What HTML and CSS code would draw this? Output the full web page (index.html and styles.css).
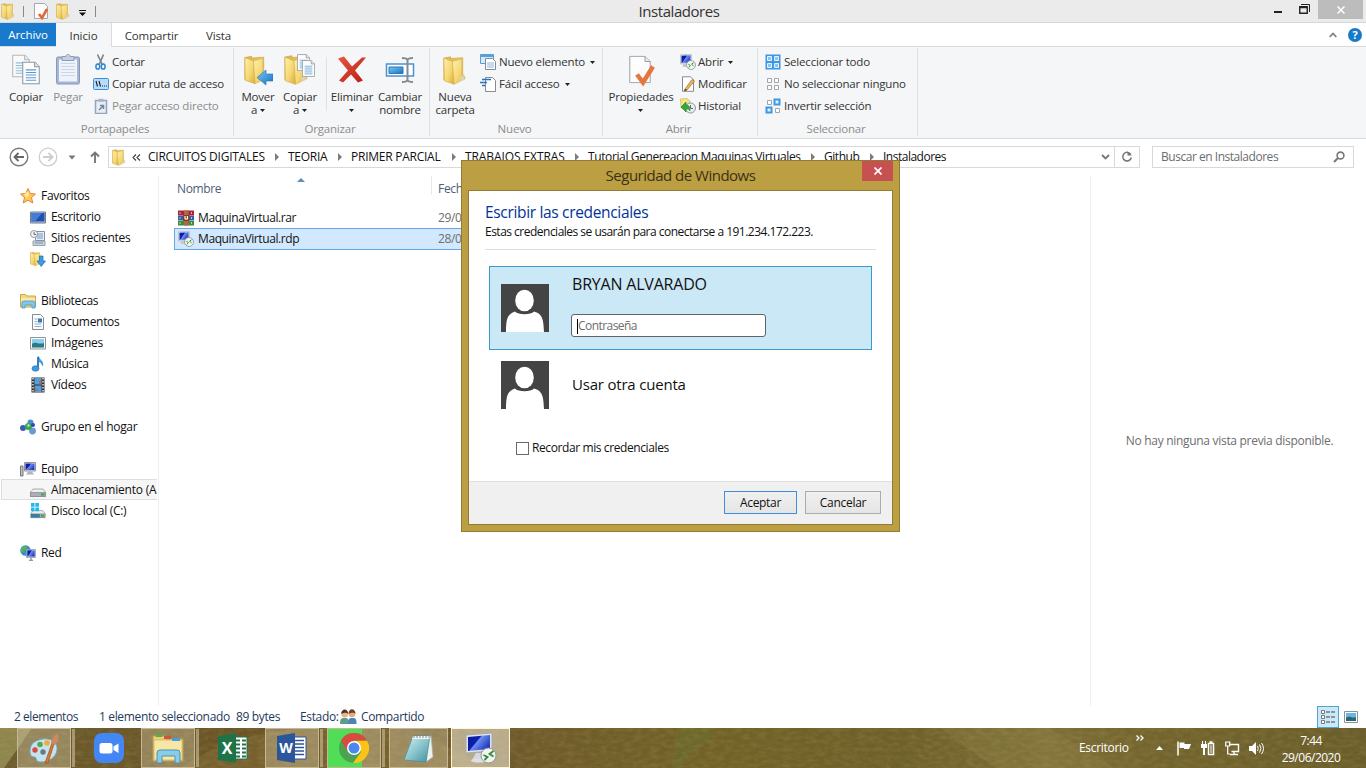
FILE: index.html
```html
<!DOCTYPE html>
<html lang="es">
<head>
<meta charset="utf-8">
<title>Instaladores</title>
<link rel="stylesheet" href="styles.css">
</head>
<body>
<svg class="defs" width="0" height="0" aria-hidden="true">
  <defs>
    <linearGradient id="gFold" x1="0" y1="0" x2="1" y2="1"><stop offset="0" stop-color="#fff0ae"/><stop offset=".55" stop-color="#f5d873"/><stop offset="1" stop-color="#d9ab3c"/></linearGradient>
    <linearGradient id="gBack" x1="0" y1="0" x2="1" y2="0"><stop offset="0" stop-color="#dcb34e"/><stop offset="1" stop-color="#e9c968"/></linearGradient>
    <linearGradient id="gScreen" x1="0" y1="0" x2="1" y2=".6"><stop offset="0" stop-color="#0a1a9c"/><stop offset=".45" stop-color="#0d1fae"/><stop offset=".5" stop-color="#6f8fee"/><stop offset="1" stop-color="#2038c0"/></linearGradient>
    <linearGradient id="gBlue" x1="0" y1="0" x2="1" y2="1"><stop offset="0" stop-color="#7ac7f5"/><stop offset="1" stop-color="#1672c4"/></linearGradient>
    <linearGradient id="gRed" x1="0" y1="0" x2="1" y2="1"><stop offset="0" stop-color="#e8553f"/><stop offset="1" stop-color="#b81f18"/></linearGradient>
    <linearGradient id="gPad" x1="0" y1="0" x2="1" y2="1"><stop offset="0" stop-color="#d8f2f4"/><stop offset=".5" stop-color="#8cc6cf"/><stop offset="1" stop-color="#3f8f9c"/></linearGradient>
    <symbol id="folder" viewBox="0 0 28 34">
      <path d="M1 2.500 L9 1 V3 L23 2 V25 L13 31 L1 28Z" fill="url(#gBack)" stroke="#c99f3e" stroke-width=".7"/>
      <path d="M1 2.500 L11 6.500 L13 33 L1.500 29Z" fill="url(#gFold)" stroke="#d2a845" stroke-width=".7"/>
      <path d="M11 6.500 L22 3.500 L22 21 C25 22 26 25 25.500 27 L13 33Z" fill="url(#gFold)" stroke="#d6ad4c" stroke-width=".6"/>
      <path d="M20 25 L25 23 L24.500 28 L19 30Z" fill="#d7d8d2" opacity=".8"/>
    </symbol>
    <symbol id="page" viewBox="0 0 22 28">
      <path d="M.8.8 H16 L21.200 6 V27.200 H.8Z" fill="#fdfdfd" stroke="#9aa0a6"/><path d="M16 .8V6H21.200" fill="#e5e8ea" stroke="#9aa0a6"/>
    </symbol>
    <symbol id="pagelines" viewBox="0 0 17 22">
      <path d="M.6.6 H12 L16.400 5 V21.400 H.6Z" fill="#fdfdfd" stroke="#8f969d"/><path d="M12 .6V5H16.400" fill="#e5e8ea" stroke="#8f969d"/>
      <path d="M3.500 8h10M3.500 10.500h10M3.500 13h10M3.500 15.500h10M3.500 18h10" stroke="#5b9bd5"/>
    </symbol>
    <symbol id="rdp" viewBox="0 0 16 16">
      <path d="M.5.8 L11.500.3 V9.500 L.5 10Z" fill="#dfe4ea" stroke="#a7adb5" stroke-width=".6"/>
      <path d="M1.500 1.800 L10.500 1.300 V8.500 L1.500 9Z" fill="url(#gScreen)"/>
      <path d="M3 10h5v3H2.500Z" fill="#c5cad0"/>
      <circle cx="11" cy="11" r="4.500" fill="#f3f5f2" stroke="#8a9298" stroke-width=".8"/>
      <path d="M8.300 10.200l2 1.300-1.500 2M13.600 8.800l-2 1.400 2 1.700" fill="none" stroke="#2d9434" stroke-width="1"/>
    </symbol>
    <symbol id="avatar" viewBox="0 0 48 48">
      <path fill="#444" d="M0 0h48v48H0z"/><ellipse cx="23.500" cy="16.500" rx="9.300" ry="10.800" fill="#fff"/>
      <path d="M5 48C5 34 7 30 14 27.500C17 31 30 31 33 27.500C41 30 42.500 34 43 48Z" fill="#fff"/>
    </symbol>
    <symbol id="caret" viewBox="0 0 5 3"><path d="M0 0h5L2.500 3z" fill="#222"/></symbol>
    <symbol id="drive" viewBox="0 0 16 16">
      <path d="M3 7h10l2.500 3v4.500h-15V10Z" fill="#eceeef" stroke="#888d92" stroke-width=".7"/><path d="M.5 10.500h15v4H.5z" fill="#a9afb3" stroke="#7a8085" stroke-width=".6"/><path d="M11 11.500h3.500v2H11z" fill="#41a541"/>
    </symbol>
    <filter id="grain" x="0" y="0" width="100%" height="100%"><feTurbulence type="fractalNoise" baseFrequency=".12 .25" numOctaves="4" seed="8"/><feColorMatrix values="0 0 0 0 .58  0 0 0 0 .44  0 0 0 0 .18  1.600 0 0 0 -.55"/></filter>
  </defs>
</svg>

<header class="titlebar">
  <div class="quick">
    <svg class="q-fold" width="14" height="17"><use href="#folder"/></svg>
    <i class="q-bar"></i>
    <svg class="q-doc" width="15" height="17" viewBox="0 0 15 17"><path d="M.5.500h10l3 3v12H.5z" fill="#fdfdfd" stroke="#a5a9ad"/><path d="M5 11l3 4L13 6" fill="none" stroke="#e0693a" stroke-width="2.600"/></svg>
    <svg class="q-fold2" width="14" height="17"><use href="#folder"/></svg>
    <svg class="q-menu" width="7" height="6" viewBox="0 0 7 6"><path d="M0 0h7v1H0zM0 2.500h7L3.500 6z" fill="#111"/></svg>
    <i class="q-bar"></i>
  </div>
  <div class="window-title">Instaladores</div>
  <div class="window-controls">
    <svg width="9" height="20" viewBox="0 0 9 20"><path d="M1 11h8v2H1z" fill="#222"/></svg>
    <svg class="restore" width="11" height="20" viewBox="0 0 11 20"><path d="M.75 6.750h7.500v6.500H.75z M.5 7.500h8" fill="none" stroke="#222" stroke-width="1.400"/><path d="M2 4.500h8.500V12" fill="none" stroke="#222"/></svg>
    <div class="close"><svg width="8" height="8" viewBox="0 0 8 8"><path d="M.5.500l7 7M7.500.500l-7 7" stroke="#fff" stroke-width="1.500"/></svg></div>
  </div>
</header>

<nav class="tabs">
  <div class="tab file">Archivo</div><div class="tab active">Inicio</div><div class="tab share">Compartir</div><div class="tab view">Vista</div>
  <div class="tab-tools">
    <svg width="8" height="6" viewBox="0 0 8 6"><path d="M.7 5L4 1.500L7.300 5" fill="none" stroke="#7e7e7e" stroke-width="1.800"/></svg>
    <div class="help">?</div>
  </div>
</nav>

<section class="ribbon">
  <div class="group clip">
    <div class="tools">
      <div class="big"><svg width="30" height="32" viewBox="0 0 30 32"><g opacity=".65"><use href="#pagelines" x="1" y="0" width="18" height="23"/></g><use href="#pagelines" x="11" y="7" width="18" height="23"/></svg><span>Copiar</span></div>
      <div class="big off"><svg width="26" height="32" viewBox="0 0 26 32"><rect x="1.500" y="2.500" width="23" height="27" rx="1.500" fill="#a7b6d2" stroke="#8798b8"/><path d="M4 5h18v22H4z" fill="#eef2fa"/><path d="M6 9h14M6 12h14M6 15h14M6 18h14M6 21h14" stroke="#cbd5e6"/><path d="M7 2h4c0-3 4-3 4 0h4v4H7z" fill="#c8d0e0" stroke="#8f9cb8"/></svg><span>Pegar</span></div>
      <div class="rows">
        <div class="row"><svg width="16" height="16" viewBox="0 0 16 16"><path d="M4.500.500L9.500 11M10.500.500L6 11" stroke="#7d8790" stroke-width="1.700"/><ellipse cx="4.800" cy="12.500" rx="1.900" ry="2.600" fill="none" stroke="#2a86cf" stroke-width="1.500"/><ellipse cx="10.200" cy="12.500" rx="1.900" ry="2.600" fill="none" stroke="#2a86cf" stroke-width="1.500"/></svg><span>Cortar</span></div>
        <div class="row"><svg width="16" height="16" viewBox="0 0 16 16"><rect x=".5" y="2.500" width="15" height="11" rx="1" fill="#b9dcfa" stroke="#3e8ede"/><path d="M3 5l1.500 5.500M6 5l1.500 5.500M9 10h1M11 10h1M13 10h1" stroke="#16212e" stroke-width="1.100"/></svg><span>Copiar ruta de acceso</span></div>
        <div class="row off"><svg width="16" height="16" viewBox="0 0 16 16"><path d="M2.500 2.500h11v13h-11z" fill="#e7ecf5" stroke="#96a4bf" stroke-width="1.500"/><path d="M5.500.800h5v3h-5z" fill="#a9b4ca"/><path d="M6 12L10 8M7 7.500h3.500V11" fill="none" stroke="#73839f" stroke-width="1.500"/></svg><span>Pegar acceso directo</span></div>
      </div>
    </div>
    <div class="caption">Portapapeles</div>
  </div>
  <div class="group organize">
    <div class="tools">
      <div class="big"><svg width="30" height="33" viewBox="0 0 30 33"><use href="#folder" x="1" y="0" width="24" height="32"/><path d="M30 20v7h-7v4l-9-7.500 9-7.500v4Z" fill="url(#gBlue)" stroke="#2673ae" stroke-width=".6"/></svg><span>Mover<br>a <svg class="car"><use href="#caret"/></svg></span></div>
      <div class="big"><svg width="32" height="33" viewBox="0 0 32 33"><use href="#folder" x="0" y="0" width="25" height="32"/><use href="#pagelines" x="13" y="0" width="13" height="17"/><use href="#pagelines" x="18" y="6" width="13" height="17"/></svg><span>Copiar<br>a <svg class="car"><use href="#caret"/></svg></span></div>
      <i class="mini"></i>
      <div class="big w50"><svg width="32" height="32" viewBox="0 0 32 32"><path d="M2 4L8 2L16 12L26 3H30L19 16L27 26L22 28L15 20L7 28L3 26L12 16Z" fill="url(#gRed)"/></svg><span>Eliminar<br><svg class="car"><use href="#caret"/></svg></span></div>
      <div class="big w46"><svg width="30" height="32" viewBox="0 0 30 32"><path d="M1.500 9.500h27v12h-27z" fill="#fff" stroke="#4894d2" stroke-width="1.500"/><path d="M4 12.500h14v6.500H4z" fill="url(#gBlue)" stroke="#3275af"/><path d="M17 3.500c3 0 5 0 5.500 2v20c-.5 2-2.500 2-5.500 2M28 3.500c-3 0-5 0-5.500 2M28 27.500c-3 0-5 0-5.500-2" fill="none" stroke="#858b91" stroke-width="2"/></svg><span>Cambiar<br>nombre</span></div>
    </div>
    <div class="caption">Organizar</div>
  </div>
  <div class="group newer">
    <div class="tools">
      <div class="big w50"><svg width="26" height="33" viewBox="0 0 26 33"><use href="#folder" x="1" y="0" width="24" height="33"/></svg><span>Nueva<br>carpeta</span></div>
      <div class="rows">
        <div class="row"><svg width="16" height="16" viewBox="0 0 16 16"><path d="M.5.500h13v9H.5z" fill="#d5eafa" stroke="#5a9ed5"/><path d="M.5 1h13v2H.5z" fill="#5a9ed5"/><path d="M5.500 4.500h7l3 3v8h-10z" fill="#fff" stroke="#858b91"/><path d="M7 9h7M7 11h7M7 13h7" stroke="#8ab8dd"/></svg><span>Nuevo elemento</span><svg class="car"><use href="#caret"/></svg></div>
        <div class="row"><svg width="16" height="16" viewBox="0 0 16 16"><path d="M5.500 1.500h7l3 3v11h-10z" fill="#fff" stroke="#858b91"/><path d="M2 3.500h9M0 6.500h7M2 9.500h3" stroke="#2675bd" stroke-width="1.500"/></svg><span>Fácil acceso</span><svg class="car"><use href="#caret"/></svg></div>
      </div>
    </div>
    <div class="caption">Nuevo</div>
  </div>
  <div class="group opener">
    <div class="tools">
      <div class="big w74"><svg width="28" height="32" viewBox="0 0 28 32"><use href="#page" x="1" y="1" width="24" height="28"/><path d="M10 20l6 8L26 12" fill="none" stroke="#e5763f" stroke-width="4.500"/></svg><span>Propiedades<br><svg class="car"><use href="#caret"/></svg></span></div>
      <div class="rows">
        <div class="row"><svg width="16" height="16"><use href="#rdp"/></svg><span>Abrir</span><svg class="car"><use href="#caret"/></svg></div>
        <div class="row"><svg width="16" height="16" viewBox="0 0 16 16"><path d="M2.500.800h8l3 3v11.500h-11z" fill="#fff" stroke="#858b91"/><path d="M5 13L12 3.500l2.500 1.500L7 14l-2.500 1z" fill="#efb65f" stroke="#9a6a2c" stroke-width=".7"/><path d="M5 13l2 1-2.500 1z" fill="#222"/></svg><span>Modificar</span></div>
        <div class="row"><svg width="16" height="16" viewBox="0 0 16 16"><path d="M.5 1L7 .5 10 3v9L1 10z" fill="#f4e58c" stroke="#cfb646" stroke-width=".7"/><circle cx="10.500" cy="10" r="5" fill="#e9eef2" stroke="#8a949c"/><path d="M10.500 7v3.500H13" fill="none" stroke="#5d6870"/><path d="M1 9l5-5v3c3 0 4 2 4 6-1-2-2-2-4-2v3z" fill="#36a93c" stroke="#1d7d2a" stroke-width=".6"/></svg><span>Historial</span></div>
      </div>
    </div>
    <div class="caption">Abrir</div>
  </div>
  <div class="group selector">
    <div class="tools">
      <div class="rows">
        <div class="row"><svg width="16" height="16" viewBox="0 0 16 16"><path d="M.5.500h15v15H.5z" fill="#3e97e3"/><path d="M2.500 2.500h4v4h-4zM9.500 2.500h4v4h-4zM2.500 9.500h4v4h-4zM9.500 9.500h4v4h-4z" fill="#8cc4f5" stroke="#e8f4fe"/></svg><span>Seleccionar todo</span></div>
        <div class="row"><svg width="16" height="16" viewBox="0 0 16 16"><path d="M2.500 2.500h4v4h-4zM9.500 2.500h4v4h-4zM2.500 9.500h4v4h-4zM9.500 9.500h4v4h-4z" fill="#fff" stroke="#a2a6aa"/></svg><span>No seleccionar ninguno</span></div>
        <div class="row"><svg width="16" height="16" viewBox="0 0 16 16"><path d="M2.500 2.500h4v4h-4zM10.500 10.500h4v4h-4z" fill="#fff" stroke="#a2a6aa"/><path d="M9.500 1.500h5v5h-5zM1.500 9.500h5v5h-5z" fill="#e3f1fd" stroke="#3e97e3" stroke-width="2"/></svg><span>Invertir selección</span></div>
      </div>
    </div>
    <div class="caption">Seleccionar</div>
  </div>
</section>

<section class="address">
  <div class="nav-buttons">
    <svg width="20" height="20" viewBox="0 0 20 20"><circle cx="10" cy="10" r="8.800" fill="none" stroke="#7a7a7a" stroke-width="1.400"/><path d="M15 10H6M9.500 6L5.500 10l4 4" fill="none" stroke="#666" stroke-width="1.900"/></svg>
    <svg width="20" height="20" viewBox="0 0 20 20"><circle cx="10" cy="10" r="8.800" fill="none" stroke="#cdcdcd" stroke-width="1.200"/><path d="M5 10h9M10.500 6l4 4-4 4" fill="none" stroke="#cdcdcd" stroke-width="1.800"/></svg>
    <svg class="hist" width="8" height="5" viewBox="0 0 8 5"><path d="M.5.500h7L4 4.500z" fill="#777"/></svg>
    <svg class="up" width="10" height="12" viewBox="0 0 10 12"><path d="M5 12V2M1 5.500L5 1.500l4 4" fill="none" stroke="#777" stroke-width="1.900"/></svg>
  </div>
  <div class="crumbs">
    <svg class="crumb-icon" width="14" height="17"><use href="#folder"/></svg>
    <svg class="chev" width="9" height="7" viewBox="0 0 9 7"><path d="M4 .5L1 3.500l3 3M8 .5L5 3.500l3 3" fill="none" stroke="#444" stroke-width="1.200"/></svg>
    <ol class="trail"><li>CIRCUITOS DIGITALES</li><li>TEORIA</li><li>PRIMER PARCIAL</li><li>TRABAJOS EXTRAS</li><li>Tutorial Genereacion Maquinas Virtuales</li><li>Github</li><li>Instaladores</li></ol>
    <svg class="drop" width="9" height="6" viewBox="0 0 9 6"><path d="M1 1l3.500 3.500L8 1" fill="none" stroke="#777" stroke-width="1.900"/></svg>
    <div class="reload"><svg width="12" height="12" viewBox="0 0 12 12"><path d="M9.800 3.500A4.300 4.300 0 1 0 10.300 6.500" fill="none" stroke="#777" stroke-width="1.500"/><path d="M6.500 .2V4.500h4.300z" fill="#777"/></svg></div>
  </div>
  <div class="search"><span>Buscar en Instaladores</span><svg width="12" height="12" viewBox="0 0 12 12"><circle cx="7.500" cy="4.500" r="3.400" fill="none" stroke="#777" stroke-width="1.600"/><path d="M5 7L1 11" stroke="#777" stroke-width="2"/></svg></div>
</section>

<main class="content">
  <aside class="tree">
    <div class="node top"><svg viewBox="0 0 16 16"><path d="M8 .5l2.200 5 5.300.500-4 3.500 1.300 5.500L8 12.200 3.200 15l1.300-5.500L.5 6l5.300-.5z" fill="#ffc74f" stroke="#e2853b"/><path d="M8 3l1.300 3.500L7 10 4 6.500z" fill="#ffeb9e"/></svg><span>Favoritos</span></div>
    <div class="node"><svg viewBox="0 0 16 16"><path d="M.5 3h15v11H.5z" fill="#b7c5d3" stroke="#6d7b8b"/><path d="M1.500 4h13v8.500h-13z" fill="#1f4fb5"/><path d="M1.500 4H12L5 12.500H1.500z" fill="#437ed5"/></svg><span>Escritorio</span></div>
    <div class="node"><svg viewBox="0 0 16 16"><path d="M5.500 1.500h9v9h-9z" fill="#e6eef5" stroke="#8793a0"/><path d="M3 11h12v4.500H3z" fill="#cbd1d7" stroke="#8793a0" stroke-width=".8"/><path d="M7 4h6M7 6h6M7 8h6M5 13h8" stroke="#6e9ac2"/><circle cx="4" cy="4" r="3.500" fill="#f4f6f8" stroke="#9097a0"/><path d="M4 2v2.500h2" fill="none" stroke="#666"/></svg><span>Sitios recientes</span></div>
    <div class="node"><svg viewBox="0 0 16 16"><use href="#folder" x="0" y="0" width="12" height="16"/><path d="M9.500 5h3.500v5h2.500l-4.250 5.500L7 10h2.500z" fill="#3b9be5" stroke="#1c6bb3" stroke-width=".7"/></svg><span>Descargas</span></div>
    <div class="node gap top"><svg viewBox="0 0 16 16"><path d="M.5 3V1.500h5L7 3h8.500v11H.5z" fill="#f1d87b" stroke="#c8a84d"/><path d="M1 5h14v4H1z" fill="#f9eaa7"/><path d="M2 15V10q0-2 2-2h9q2 0 2 2v5h-3v-3H5v3z" fill="#82c8ee" stroke="#4a97c9" stroke-width=".8"/></svg><span>Bibliotecas</span></div>
    <div class="node"><svg viewBox="0 0 16 16"><path d="M2.500.500h8l3 3v12h-11z" fill="#fcfdfe" stroke="#858d95"/><path d="M4.500 5h3M4.500 7.500h3M4.500 10h7M4.500 12.500h7" stroke="#92aeca"/><path d="M8 4.500h4v4H8z" fill="#3b78ad"/></svg><span>Documentos</span></div>
    <div class="node"><svg viewBox="0 0 16 16"><path d="M.5 2.500h15v11.500H.5z" fill="#fff" stroke="#8a9298"/><path d="M2 4h12v8.500H2z" fill="#8dcdee"/><path d="M2 9c4-3 6 1 12-1v4.500H2z" fill="#2f7a82"/></svg><span>Imágenes</span></div>
    <div class="node"><svg viewBox="0 0 16 16"><path d="M8 1v11" stroke="#2274bb" stroke-width="1.800"/><path d="M8.500.500c1 4 5 4 4 9-1-3-2-3.500-4-4z" fill="#4ba5e6" stroke="#2274bb" stroke-width=".7"/><ellipse cx="5.500" cy="12.500" rx="3.500" ry="2.700" fill="#3d9be2" stroke="#2274bb" stroke-width=".7"/></svg><span>Música</span></div>
    <div class="node"><svg viewBox="0 0 16 16"><path d="M1.500.500h13v15h-13z" fill="#2c3137"/><path d="M4.500 1h7v6.500h-7zM4.500 8.500h7V15h-7z" fill="#549fdd"/><path d="M3 1v14M13 1v14" stroke="#fff" stroke-width="1.300" stroke-dasharray="1.500 1.500"/><path d="M9 3l2.500 2v2.500H9zM5 10l4 4H5z" fill="#b2684a"/></svg><span>Vídeos</span></div>
    <div class="node gap top"><svg viewBox="0 0 16 16"><circle cx="10.500" cy="3.500" r="3" fill="#4d8ed8"/><circle cx="3" cy="9" r="3" fill="#365eb5"/><circle cx="12.500" cy="12" r="3.400" fill="#6f96d5"/><circle cx="8.500" cy="7.500" r="3.600" fill="#3aa84d"/><path d="M7 6l2-1 1 2-2 1z" fill="#b8e8b3"/><circle cx="13" cy="6" r="2" fill="#284ea5"/></svg><span>Grupo en el hogar</span></div>
    <div class="node gap top"><svg viewBox="0 0 16 16"><path d="M4.500 1.500h11v8.500h-11z" fill="#dfe3e8" stroke="#8e959d"/><path d="M5.500 2.500h9V9h-9z" fill="url(#gScreen)"/><path d="M8 10.500h4l2 3H6z" fill="#b0b6bb"/><path d="M.5 5h2.500v10H.5z" fill="#bcc2c7" stroke="#777"/></svg><span>Equipo</span></div>
    <div class="node picked"><svg><use href="#drive" width="16" height="16"/></svg><span>Almacenamiento (A</span></div>
    <div class="node"><svg viewBox="0 0 16 16"><use href="#drive" x="0" y="1" width="16" height="15"/><path d="M.8 11h9v3.500h-9z" fill="#397da0"/><path d="M1 0h3.500v3.700H1zM5.300 0H9v3.700H5.300zM1 4.500h3.500v3.700H1zM5.300 4.500H9v3.700H5.300z" fill="#20b9ef"/></svg><span>Disco local (C:)</span></div>
    <div class="node gap top"><svg viewBox="0 0 16 16"><circle cx="5.500" cy="5.500" r="5.200" fill="#3a8fca"/><path d="M2 2l4-1.500 1 3L4 6 2 8 .5 5z" fill="#52b653"/><path d="M6.500 4.500h9v8h-9z" fill="#d9dee6" stroke="#8e959d" stroke-width=".7"/><path d="M7.300 5.300h7.400v6.300H7.300z" fill="url(#gScreen)"/><path d="M9 15.500h4M11 12.500v3" stroke="#929aa2" stroke-width="1.500"/></svg><span>Red</span></div>
  </aside>
  <section class="files">
    <div class="columns"><div class="col name">Nombre<svg class="sort" width="8" height="4" viewBox="0 0 8 4"><path d="M0 4L4 0l4 4z" fill="#5f8fb5"/></svg></div><div class="col date">Fecha</div></div>
    <div class="file-row"><svg width="16" height="16" viewBox="0 0 16 16"><path d="M0 .5h16v5H0z" fill="#a7263e"/><path d="M0 5.700h16v4.500H0z" fill="#3b59a6"/><path d="M0 10.500h16v5H0z" fill="#3d8c43"/><path d="M2 2v2M2 7v2M2 12v2M13.500 2v2M13.500 7v2M13.500 12v2" stroke="#fff" stroke-opacity=".6"/><path d="M6 .5h4.500v15H6z" fill="#b7653a"/><path d="M5.500 5.500h5.500v5H5.500z" fill="#b0553c" stroke="#704324"/><path d="M7 6v3h2.500V6" fill="none" stroke="#fff"/></svg><span class="fname">MaquinaVirtual.rar</span><span class="fdate">29/06/2020</span></div>
    <div class="file-row chosen"><svg width="16" height="16"><use href="#rdp"/></svg><span class="fname">MaquinaVirtual.rdp</span><span class="fdate">28/06/2020</span></div>
  </section>
  <aside class="preview"><span>No hay ninguna vista previa disponible.</span></aside>
</main>

<footer class="status">
  <span class="s-count">2 elementos</span><span class="s-sel">1 elemento seleccionado</span><span class="s-size">89 bytes</span><span class="s-state">Estado:</span>
  <svg class="s-people" width="17" height="16" viewBox="0 0 17 16"><path d="M0 15c0-5 1-6 4.500-6S9 10 9 15z" fill="#5d9c8f"/><circle cx="4.700" cy="5.200" r="3.300" fill="#e8b48c"/><path d="M1.200 5c0-6 7-6 7 0-2-2-4-1-7 0z" fill="#4d3326"/><path d="M8 15c0-5 1-6 4.500-6s4 1 4 6z" fill="#4e83b5"/><circle cx="12" cy="5" r="3.300" fill="#e4ab83"/><path d="M8.500 4.800c0-6 7-6 7 0-2-2-4-1-7 0z" fill="#6d4429"/></svg>
  <span class="s-share">Compartido</span>
  <div class="views">
    <div class="view-btn"><svg width="16" height="16" viewBox="0 0 16 16"><path d="M1.500 1.500h3v3h-3zM1.500 6.500h3v3h-3zM1.500 11.500h3v3h-3z" fill="#fff" stroke="#777"/><path d="M6 3h4M11 3h4M6 8h4M11 8h4M6 13h4M11 13h4" stroke="#444" stroke-width="1.200"/></svg></div>
    <svg width="14" height="12" viewBox="0 0 14 12"><path d="M.5.500h13v11H.5z" fill="#fff" stroke="#8a9298"/><path d="M2 2h10v8H2z" fill="#68b6e5"/><path d="M2 7c4-3 6 1 10-1v4H2z" fill="#2a666e"/></svg>
  </div>
</footer>

<footer class="taskbar">
  <svg class="texture" width="1366" height="40" viewBox="0 0 1366 40"><path d="M0 0h32L4 40H0z" fill="#989358" opacity=".75"/><path d="M676 0h40c-2 14-22 20-36 40h-8z" fill="#6c692d" opacity=".7"/><path d="M940 0h110l65 40h-120z" fill="#9d9454" opacity=".2"/><path d="M180 40C230 5 290 0 320 0h90l80 40z" fill="#927d43" opacity=".3"/><rect width="1366" height="40" filter="url(#grain)" opacity=".2"/></svg>
  <div class="apps">
    <div class="app frame stack"><svg width="32" height="32" viewBox="0 0 32 32"><path d="M2 19C2 11 8 8 15 7c9-1 15 4 14 11-1 8-9 12-16 12-7 0-3-5-7-5-3 0-4-3-4-6z" fill="#c5e2f0" stroke="#75a5bc"/><circle cx="7" cy="18" r="2.700" fill="#d64b3e"/><circle cx="12" cy="12.500" r="2.800" fill="#55aa49"/><circle cx="19" cy="11" r="2.800" fill="#f0ac38"/><circle cx="15" cy="20" r="2.700" fill="#6a7a78"/><path d="M17 31l7-20 2 1-6 19z" fill="#d9792c" stroke="#9e4f1b" stroke-width=".7"/><path d="M23 12c0-7 4-8 7-11 1 5 1 9-3 12z" fill="#c88a5e"/></svg></div>
    <div class="app bare"><svg width="30" height="30" viewBox="0 0 30 30"><rect width="30" height="30" rx="8" fill="#4387f4"/><rect x="5.500" y="10" width="13" height="10.500" rx="2.500" fill="#fff"/><path d="M19.500 13.500l5-3v9.500l-5-3z" fill="#fff"/></svg></div>
    <div class="app frame stack"><svg width="32" height="32" viewBox="0 0 32 32"><path d="M1 4h11l2 3h17v22H1z" fill="#ecd075" stroke="#bd9d4d"/><path d="M2 8h28v20H2z" fill="#f7e7a4" stroke="#c5aa58" stroke-width=".6"/><path d="M4 2h6v3H4z" fill="#56ad4a"/><path d="M12 4h7v3h-7z" fill="#cc5543"/><path d="M20 6h8v3h-8z" fill="#4a9ddd"/><path d="M5 31V21q0-3 3-3h17q3 0 3 3v10h-5v-7H10v7z" fill="#8acce8" stroke="#4a91b5"/></svg></div>
    <div class="app bare"><svg width="30" height="30" viewBox="0 0 30 30"><path d="M16 4h13v22H16z" fill="#fff" stroke="#23734a"/><path d="M18 7.500h4M24 7.500h4M18 11.500h4M24 11.500h4M18 15.500h4M24 15.500h4M18 19.500h4M24 19.500h4M18 23.500h4M24 23.500h4" stroke="#23734a" stroke-width="2"/><path d="M0 3l18-3v30L0 27z" fill="#207347"/><text x="9" y="20.500" text-anchor="middle" class="office">X</text></svg></div>
    <div class="app frame stack"><svg width="30" height="30" viewBox="0 0 30 30"><path d="M16 4h13v22H16z" fill="#fff" stroke="#2b579a"/><path d="M18 7.500h9M18 11h9M18 14.500h9M18 18h9M18 21.500h9" stroke="#2b579a" stroke-width="1.500"/><path d="M0 3l18-3v30L0 27z" fill="#2b579a"/><text x="9" y="20" text-anchor="middle" class="office word">W</text></svg></div>
    <div class="app frame stack chrome"><svg width="30" height="30" viewBox="0 0 30 30"><circle cx="15" cy="15" r="15" fill="#4ba352"/><path d="M28 7.500H15l7 11.500-8 11A15 15 0 0 0 28 7.500z" fill="#fbc318"/><path d="M2 7.500A15 15 0 0 1 28 7.500H15L8.500 18z" fill="#d94b3e"/><circle cx="15" cy="15" r="7" fill="#fff"/><circle cx="15" cy="15" r="5.500" fill="#4a88ed"/></svg></div>
    <div class="app frame notepad"><svg width="32" height="32" viewBox="0 0 32 32"><path d="M25 4h3l2 21-7 5z" fill="#edf1ed" stroke="#a6b2b2" stroke-width=".7"/><path d="M10 4h17l-4 26L1 28z" fill="url(#gPad)" stroke="#4d8c97" stroke-width=".7"/><path d="M10 4h17l-.5 3H9z" fill="#f1f4f4"/><path d="M11 2v4M14 2v4M17 2v4M20 2v4M23 2v4M26 2v4" stroke="#7d8784"/></svg></div>
    <div class="app frame current"><svg width="32" height="32" viewBox="0 0 32 32"><path d="M1 3l26-2v18L1 21z" fill="#e0e4ea" stroke="#a3aab2"/><path d="M3 5l22-2v14L3 19z" fill="url(#gScreen)"/><path d="M11 21h7l3 7H7z" fill="#d5d9de"/><ellipse cx="14" cy="28.500" rx="8" ry="2" fill="#dce0e5"/><circle cx="23.500" cy="23.500" r="7.500" fill="#f2f3f0" stroke="#8e9696"/><path d="M18.500 23l4 2-3 3M28.500 19l-4 3 4 2.500" fill="none" stroke="#328c37" stroke-width="1.800"/></svg></div>
  </div>
  <div class="tray">
    <span class="desk">Escritorio</span>
    <svg class="more" width="8" height="6" viewBox="0 0 8 6"><path d="M.5.500L3 3 .5 5.500M4.500.500L7 3 4.500 5.500" fill="none" stroke="#fff" stroke-width="1.300"/></svg>
    <svg class="t-up" width="7" height="4" viewBox="0 0 7 4"><path d="M0 4L3.500 0L7 4z" fill="#fff"/></svg>
    <svg class="t-flag" width="15" height="15" viewBox="0 0 15 15"><path d="M1 .5v14" stroke="#fff" stroke-width="1.500"/><path d="M2.500 1.500h5v1.500h6.500l-2 5H7V7H2.500z" fill="#fff"/></svg>
    <svg class="t-bat" width="14" height="15" viewBox="0 0 14 15"><path d="M7.500 2.500h5v11h-5zM8.500 1h3" fill="none" stroke="#fff" stroke-width="1.500"/><path d="M9 4h2v8H9z" fill="#fff" opacity=".5"/><path d="M1.500 0v4M4.500 0v4" stroke="#fff"/><path d="M0 3h6v4H4v7H2V7H0z" fill="#fff"/></svg>
    <svg class="t-net" width="15" height="15" viewBox="0 0 15 15"><path d="M4.500 3.500h9v7h-7M9 11v2M5 13.500h8" fill="none" stroke="#fff" stroke-width="1.400"/><path d="M.7 1h4v4h-4zM2.700 5v8H5" fill="none" stroke="#fff" stroke-width="1.200"/></svg>
    <svg class="t-vol" width="15" height="13" viewBox="0 0 15 13"><path d="M0 4h3l4-4v13L3 9H0z" fill="#fff"/><path d="M8.500 4q1.500 2.500 0 5M10.500 2.500q3 4 0 8M12.500 1q4 5.500 0 11" fill="none" stroke="#fff" stroke-width="1"/></svg>
    <div class="clock"><span>7:44</span><span>29/06/2020</span></div>
  </div>
</footer>

<div class="dialog">
  <div class="dialog-title"><span>Seguridad de Windows</span><div class="dialog-close"><svg width="8" height="8" viewBox="0 0 8 8"><path d="M.5.500l7 7M7.500.500l-7 7" stroke="#fff" stroke-width="1.700"/></svg></div></div>
  <div class="dialog-pane">
    <div class="dialog-body">
      <h1>Escribir las credenciales</h1>
      <p class="lead">Estas credenciales se usarán para conectarse a 191.234.172.223.</p>
      <div class="card"><svg width="48" height="48"><use href="#avatar"/></svg><div class="who"><div class="user">BRYAN ALVARADO</div><div class="pass"><i></i><span>Contraseña</span></div></div></div>
      <div class="other"><svg width="48" height="48"><use href="#avatar"/></svg><span>Usar otra cuenta</span></div>
      <div class="remember"><i></i><span>Recordar mis credenciales</span></div>
    </div>
    <div class="dialog-foot"><div class="btn ok">Aceptar</div><div class="btn cancel">Cancelar</div></div>
  </div>
</div>
</body>
</html>
```
FILE: styles.css
```css
* { box-sizing: border-box; }
body { margin: 0; width: 1366px; height: 768px; overflow: hidden; position: relative; display: flex; flex-direction: column; background: #fff; color: #111; font: 12px/16px "Open Sans", "Noto Sans", sans-serif; letter-spacing: -0.3px; white-space: nowrap; }
svg { display: block; flex: none; }
.defs { position: absolute; }

.titlebar { height: 23px; flex: none; display: grid; grid-template-columns: 339px 680px 347px; background: #ebebeb; border-bottom: 1px solid #d6d7d8; }
.quick { display: flex; align-items: center; padding-left: 1px; }
.q-bar { width: 1px; height: 11px; background: #888; margin-left: 8px; }
.q-doc { margin-left: 10px; }
.q-fold2 { margin-left: 7px; }
.q-menu { margin: 2px 1px 0 9px; }
.window-title { text-align: center; font-size: 15px; line-height: 23px; letter-spacing: -0.45px; color: #333; }
.window-controls { display: flex; justify-content: flex-end; padding-right: 3px; }
.restore { margin-left: 17px; }
.close { width: 45px; height: 19px; margin-left: 8px; background: #bcbcbc; display: flex; align-items: center; justify-content: center; }

.tabs { height: 24px; flex: none; display: flex; border-bottom: 1px solid #dadbdc; letter-spacing: -0.1px; }
.tab { text-align: center; line-height: 25px; color: #333; font-size: 11.5px; }
.file { width: 56px; height: 23px; line-height: 24px; background: #1979ca; color: #fff; }
.active { width: 56px; height: 24px; background: #f5f6f7; border-right: 1px solid #dadbdc; }
.share { width: 79px; }
.view { width: 55px; }
.tab-tools { margin-left: auto; display: flex; align-items: center; gap: 11px; padding-right: 4px; }
.help { width: 14px; height: 14px; border-radius: 50%; background: #1979ca; color: #fff; font-weight: 700; font-size: 11px; line-height: 14px; text-align: center; letter-spacing: 0; }

.ribbon { height: 92px; flex: none; display: flex; background: #f5f6f7; border-bottom: 1px solid #dadbdc; font-size: 11.5px; letter-spacing: -0.2px; color: #333; }
.group { height: 88px; margin-top: 1px; border-right: 1px solid #dfe1e3; }
.tools { display: flex; height: 73px; }
.clip { width: 234px; }
.clip .tools { padding-left: 5px; }
.organize { width: 196px; }
.organize .tools { padding-left: 3px; }
.newer { width: 173px; }
.opener { width: 155px; }
.opener .tools { padding-left: 1px; }
.selector { width: 160px; }
.selector .tools { padding-left: 7px; }
.caption { text-align: center; line-height: 16px; color: #8c8c8c; padding-right: 3px; }
.big { display: flex; flex-direction: column; align-items: center; width: 42px; padding-top: 6px; text-align: center; line-height: 13px; }
.big > svg { height: 33px; }
.big span { padding-top: 3px; }
.w50 { width: 50px; }
.w46 { width: 46px; }
.w74 { width: 74px; }
.mini { width: 1px; height: 54px; margin: 9px 0 0 5px; background: #dfe1e3; }
.car { display: inline-block; width: 5px; height: 3px; vertical-align: 2px; }
.off { color: #8c8c8c; }
.rows { display: flex; flex-direction: column; padding-top: 3px; }
.clip .rows { margin-left: 4px; }
.row { height: 22px; display: flex; align-items: center; gap: 3px; }
.row .car { margin-left: 2px; }
.opener .rows { margin-left: 2px; }
.opener .row { gap: 2px; }

.address { height: 37px; flex: none; display: flex; align-items: flex-start; padding-top: 7px; }
.nav-buttons { width: 108px; height: 22px; display: flex; align-items: center; padding-left: 9px; gap: 9px; }
.hist { margin-left: 1px; }
.up { margin-left: 5px; }
.crumbs { width: 1032px; height: 22px; display: flex; align-items: center; border: 1px solid #d9d9d9; padding-left: 3px; }
.chev { margin-left: 6px; }
.trail { display: flex; list-style: none; margin: 0 0 0 7px; padding: 0; }
.trail li { display: flex; align-items: center; letter-spacing: -0.25px; }
.trail li::after { content: ""; border: 4px solid transparent; border-left-color: #7c7c7c; border-right: 0; margin-left: auto; margin-right: 9px; }
.trail li:last-child::after { display: none; }
.trail li:nth-child(1) { width: 140px; }
.trail li:nth-child(2) { width: 63px; }
.trail li:nth-child(3) { width: 114px; }
.trail li:nth-child(4) { width: 123px; letter-spacing: -0.08px; }
.trail li:nth-child(5) { width: 236px; letter-spacing: -0.38px; }
.trail li:nth-child(6) { width: 59px; letter-spacing: -0.45px; }
.trail li:nth-child(7) { letter-spacing: -0.5px; }
.drop { margin-left: auto; }
.reload { width: 25px; height: 20px; margin-left: 4px; border-left: 1px solid #d9d9d9; display: flex; align-items: center; justify-content: center; }
.search { width: 202px; height: 22px; margin-left: 12px; border: 1px solid #d9d9d9; display: flex; align-items: center; justify-content: space-between; padding: 0 8px; color: #6d6d6d; letter-spacing: -0.47px; }

.content { height: 530px; flex: none; display: flex; }
.tree { width: 159px; border-right: 1px solid #f0f0f0; padding-top: 9px; overflow: hidden; }
.node { height: 21px; width: 157px; overflow: hidden; display: flex; align-items: center; gap: 5px; padding-left: 30px; }
.node svg { width: 16px; height: 16px; }
.top { padding-left: 20px; }
.gap { margin-top: 21px; }
.picked { margin-left: 1px; width: 156px; background: #f6f6f6; border: 1px solid #dedede; border-right: 0; padding-left: 28px; letter-spacing: -0.2px; }
.files { width: 932px; border-right: 1px solid #f0f0f0; padding-left: 15px; }
.columns { display: flex; height: 31px; color: #4c607a; }
.col { line-height: 26px; }
.name { position: relative; width: 258px; padding-left: 3px; border-right: 1px solid #e8e8e8; height: 19px; letter-spacing: -0.35px; }
.sort { position: absolute; left: 123px; top: 2px; }
.date { padding-left: 6px; }
.file-row { height: 21px; width: 640px; display: flex; align-items: center; padding-left: 4px; gap: 4px; letter-spacing: -0.4px; }
.chosen { height: 22px; border: 1px solid #66a7e8; padding-left: 3px; background: #d1e8ff; }
.fname { width: 236px; }
.fdate { color: #6d6d6d; }
.preview { width: 275px; padding-left: 2px; display: flex; align-items: center; justify-content: center; color: #6d6d6d; }

.status { height: 22px; flex: none; display: flex; align-items: center; padding-left: 14px; color: #1e395b; letter-spacing: -0.35px; }
.s-count { width: 85px; letter-spacing: -0.45px; }
.s-sel { width: 137px; }
.s-size { width: 64px; }
.s-state { width: 40px; }
.s-people { margin-right: 4px; }
.views { margin-left: auto; display: flex; align-items: center; gap: 5px; padding-right: 8px; }
.view-btn { width: 22px; height: 22px; border: 1px solid #4fa6d2; background: #cbe8f6; display: flex; align-items: center; justify-content: center; }

.taskbar { height: 40px; flex: none; position: relative; display: flex; overflow: hidden; background: linear-gradient(90deg, #6b5b2e 0, #6a5426 250px, #6e5a2b 520px, #716227 700px, #6e602a 900px, #7d6d36 1050px, #72642d 1160px, #6a5d2a 1366px); }
.texture { position: absolute; left: 0; top: 0; }
.apps { position: relative; display: flex; padding-left: 17px; }
.app { height: 40px; display: flex; align-items: center; justify-content: center; }
.frame { width: 54px; border: 1px solid #c6b893; background: rgba(226, 216, 183, .35); }
.stack { margin-right: 5px; box-shadow: 2px 0 0 -1px #6b5b2e, 5px 0 0 -1px rgba(212, 199, 165, .55); }
.bare { width: 65px; }
.chrome { background: linear-gradient(90deg, #51dd55 0 34px, rgba(226, 216, 183, .35) 34px); margin-left: 3px; }
.notepad { width: 59px; margin-left: 3px; }
.current { width: 59px; margin-left: 3px; background: rgba(233, 225, 201, .6); border-color: #fff5dc; }
.office { font: bold 16px "Open Sans", sans-serif; fill: #fff; letter-spacing: 0; }
.word { font-size: 14px; }
.tray { position: relative; margin-left: auto; width: 288px; display: flex; align-items: center; color: #fff; }
.desk { width: 58px; padding-left: 1px; }
.more { margin-bottom: 21px; }
.t-up { margin-left: 12px; }
.t-flag { margin-left: 14px; }
.t-bat { margin-left: 9px; }
.t-net { margin-left: 10px; }
.t-vol { margin-left: 9px; }
.clock { width: 94px; padding-top: 1px; display: flex; flex-direction: column; align-items: center; line-height: 17px; letter-spacing: -0.5px; }

.dialog { position: absolute; left: 461px; top: 160px; width: 439px; height: 372px; padding: 0 6px 6px; background: #bc9f43; border: 1px solid #927c34; }
.dialog-title { height: 29px; text-align: center; font-size: 15px; line-height: 28px; letter-spacing: -0.5px; color: #3b3113; position: relative; }
.dialog-close { position: absolute; right: 0; top: 0; width: 31px; height: 20px; background: #c75050; display: flex; align-items: center; justify-content: center; }
.dialog-pane { height: 335px; border: 1px solid #927c34; background: #fff; display: flex; flex-direction: column; }
.dialog-body { height: 290px; padding: 11px 16px 0; }
h1 { margin: 0; font-size: 15.5px; font-weight: 400; line-height: 20px; letter-spacing: -0.33px; color: #039; }
.lead { margin: 0; height: 28px; padding-top: 2px; border-bottom: 1px solid #dedede; letter-spacing: -0.51px; }
.card { width: 383px; height: 84px; margin: 16px 0 0 4px; padding: 0 0 0 11px; border: 1px solid #3a9ac8; background: #cbe8f6; display: flex; align-items: center; }
.who { margin-left: 22px; height: 78px; }
.user { font-size: 16px; line-height: 30px; height: 45px; padding-left: 1px; letter-spacing: -0.2px; }
.pass { width: 195px; height: 23px; border: 1px solid #5f6468; border-radius: 3px; background: #fff; display: flex; align-items: center; padding: 1px 0 0 5px; color: #6d6d6d; letter-spacing: -0.55px; }
.pass i { width: 1px; height: 15px; background: #000; }
.other { margin: 11px 0 0 16px; display: flex; align-items: center; gap: 23px; font-size: 15px; letter-spacing: -0.2px; }
.other span { padding-bottom: 3px; }
.remember { margin: 31px 0 0 31px; display: flex; align-items: center; gap: 3px; letter-spacing: -0.4px; }
.remember i { width: 13px; height: 13px; border: 1px solid #6a6a6a; }
.dialog-foot { height: 43px; background: #f0f0f0; border-top: 1px solid #dfdfdf; display: flex; justify-content: flex-end; gap: 8px; padding: 9px 11px 0 0; }
.btn { height: 23px; width: 76px; text-align: center; line-height: 22px; border: 1px solid #acacac; background: linear-gradient(#f0f0f0, #e5e5e5); }
.ok { width: 73px; border-color: #3c8fdc; }
```
